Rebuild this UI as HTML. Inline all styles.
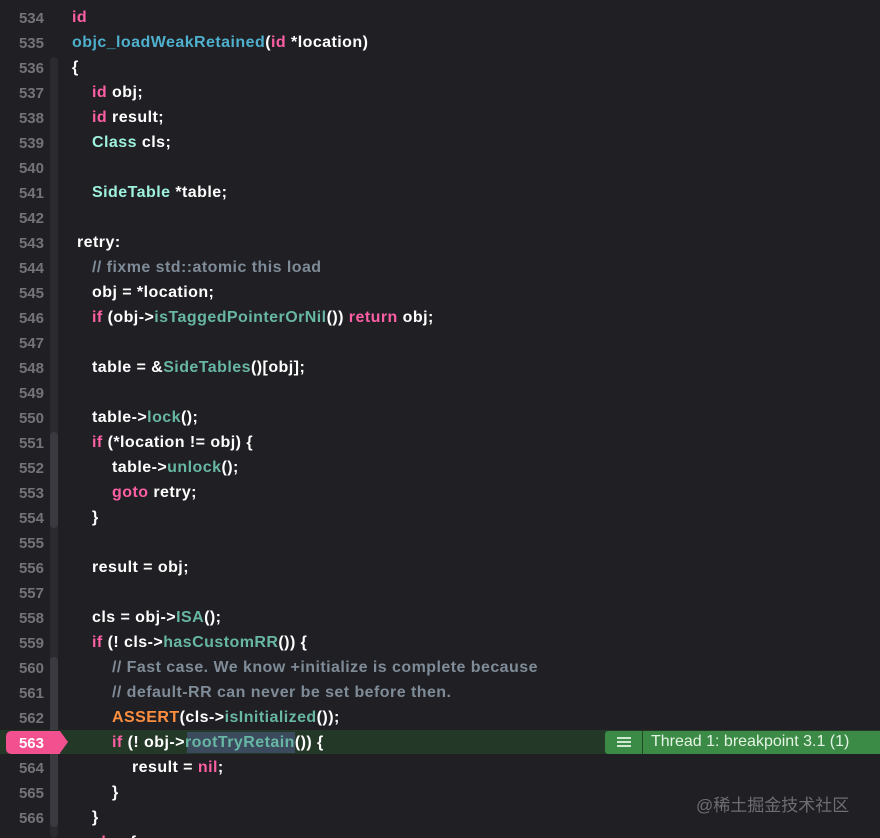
<!DOCTYPE html>
<html><head><meta charset="utf-8"><style>
html,body{margin:0;width:880px;height:838px;overflow:hidden}
body{background:#1f1f24;position:relative;font-family:"Liberation Sans","DejaVu Sans",sans-serif;}
.ln{position:absolute;left:0;width:44px;text-align:right;color:#747478;font-size:15px;font-weight:bold;}
.c{position:absolute;left:72px;color:#fff;font-size:16px;font-weight:bold;white-space:pre;letter-spacing:0.45px}
.k{color:#fc5fa3}.f{color:#67b7a4}.t{color:#9ef1dd}.b{color:#4eb0cc}.o{color:#fd8f3f}.m{color:#7f8c98}
.bar{position:absolute;left:50px;width:8px;border-radius:4px}
</style></head><body>
<div class="bar" style="top:57px;height:781px;background:#2a2a2f"></div>
<div class="bar" style="top:432px;height:96px;background:#3a3a40"></div>
<div class="bar" style="top:657px;height:170px;background:#3a3a40"></div>
<div style="position:absolute;left:0;top:730px;width:880px;height:24px;background:#243827"></div>
<div style="position:absolute;left:187px;top:732px;width:108px;height:21px;background:#3b4a5c"></div>
<div style="position:absolute;left:6px;top:731px;width:54px;height:23px;background:#f2508f;border-radius:5px 0 0 5px"></div>
<div style="position:absolute;left:60px;top:731px;width:0;height:0;border-top:11.5px solid transparent;border-bottom:11.5px solid transparent;border-left:8px solid #f2508f"></div>
<div style="position:absolute;left:605px;top:731px;width:275px;height:23px;background:#3b8a45;border-radius:3px 0 0 3px"></div>
<div style="position:absolute;left:642px;top:731px;width:1px;height:23px;background:#1f4a24"></div>
<div style="position:absolute;left:617px;top:737px;width:14px;height:2px;background:#cfe8cf;box-shadow:0 4px 0 #cfe8cf,0 8px 0 #cfe8cf"></div>
<div style="position:absolute;left:651px;top:733px;color:#e4f4e4;font-size:16px">Thread 1: breakpoint 3.1 (1)</div>
<div style="position:absolute;left:696px;top:791px;color:#6e6e72;font-size:17px;font-family:'Liberation Sans','Noto Sans CJK SC',sans-serif">@稀土掘金技术社区</div>
<div id="code"></div>
<script>
var L=[
'<span class="k">id</span>',
'<span class="b">objc_loadWeakRetained</span>(<span class="k">id</span> *location)',
'{',
'   <span class="k">id</span> obj;',
'   <span class="k">id</span> result;',
'   <span class="t">Class</span> cls;',
'',
'   <span class="t">SideTable</span> *table;',
'',
' retry:',
'   <span class="m">// fixme std::atomic this load</span>',
'   obj = *location;',
'   <span class="k">if</span> (obj-&gt;<span class="f">isTaggedPointerOrNil</span>()) <span class="k">return</span> obj;',
'',
'   table = &amp;<span class="f">SideTables</span>()[obj];',
'',
'   table-&gt;<span class="f">lock</span>();',
'   <span class="k">if</span> (*location != obj) {',
'      table-&gt;<span class="f">unlock</span>();',
'      <span class="k">goto</span> retry;',
'   }',
'',
'   result = obj;',
'',
'   cls = obj-&gt;<span class="f">ISA</span>();',
'   <span class="k">if</span> (! cls-&gt;<span class="f">hasCustomRR</span>()) {',
'      <span class="m">// Fast case. We know +initialize is complete because</span>',
'      <span class="m">// default-RR can never be set before then.</span>',
'      <span class="o">ASSERT</span>(cls-&gt;<span class="f">isInitialized</span>());',
'      <span class="k">if</span> (! obj-&gt;<span class="f">rootTryRetain</span>()) {',
'         result = <span class="k">nil</span>;',
'      }',
'   }',
'   <span class="k">else</span> {'];
var h='';
for(var i=0;i<L.length;i++){
 var y=9+i*25; var n=534+i;
 var s=L[i].replace(/^( *)/,function(m){return '<span style="display:inline-block;width:'+(m.length===1?5:m.length/3*20)+'px"></span>'});
 if(L[i].startsWith(' retry'))s='<span style="display:inline-block;width:5px"></span>retry:';
 h+='<div class="ln" style="top:'+(y+1)+'px;'+(n==563?'color:#fff;':'')+'">'+n+'</div>';
 h+='<div class="c" style="top:'+y+'px">'+s+'</div>';
}
document.getElementById('code').innerHTML=h;
</script>
</body></html>
